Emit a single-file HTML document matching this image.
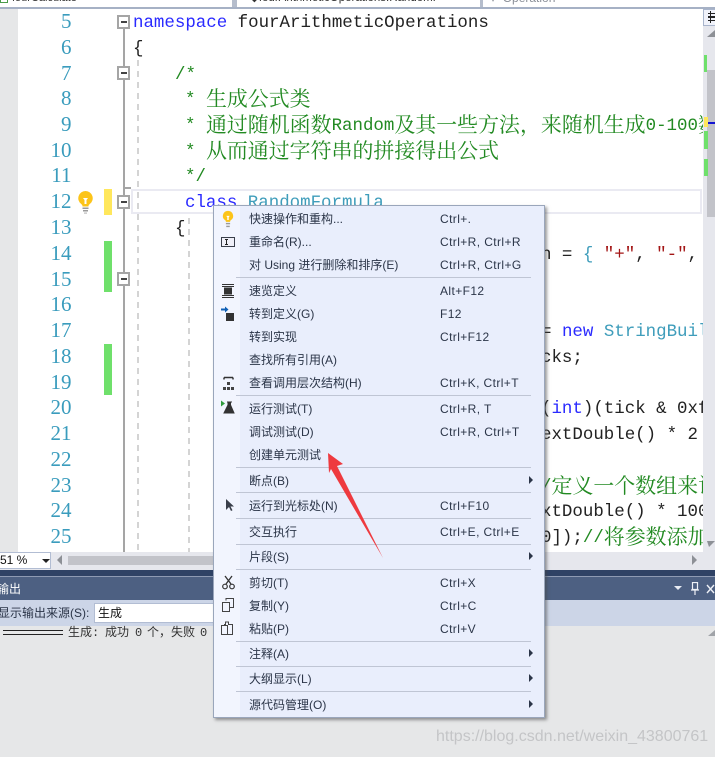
<!DOCTYPE html>
<html lang="zh"><head><meta charset="utf-8"><style>
html,body{margin:0;padding:0;width:715px;height:757px;overflow:hidden;background:#e6e7e8}
div,span,svg{box-sizing:border-box}
.a{position:absolute}
#page{position:relative;width:715px;height:757px;overflow:hidden}
.n{position:absolute;left:20px;width:51.5px;text-align:right;font:21px/26px "Liberation Serif",serif;color:#3a9cbd;height:26px}
#code{position:absolute;left:0;top:0;width:703px;height:552px;overflow:hidden}
.l{position:absolute;height:26px;margin-top:2px;white-space:pre;font:17.45px/26px "Liberation Mono","Noto Serif CJK SC",monospace;color:#222}
.c{color:#228a22}.c b{font:400 20.94px/0 "Noto Serif CJK SC",serif;position:relative;top:2px}
.k{color:#2a2aff}.t{color:#3f9dbb}.s{color:#a31515}
.box{position:absolute;left:117px;width:13px;height:14px;background:#fff;border:2px solid #a5a5a5}
.box:after{content:"";position:absolute;left:2px;top:4px;width:6px;height:2px;background:#444}
#menu{position:absolute;left:213px;top:205px;width:332px;height:513px;background:#e9eefc;border:1px solid #9aa6bb;box-shadow:2px 2px 3px rgba(70,70,70,.55)}
#strip{position:absolute;left:0;top:0;width:26px;height:511px;background:#f2f5fe}
.m,.sc{position:absolute;margin-top:1px;font:12px/16px "Liberation Sans","Noto Sans CJK SC",sans-serif;color:#2b3548;white-space:pre}
.m{left:35px}.sc{left:226px;letter-spacing:.4px}
.sep{position:absolute;left:22px;width:295px;height:1px;background:#bfc5d4}
.ar{position:absolute;left:315px;width:0;height:0;border-left:4px solid #2b3548;border-top:4px solid transparent;border-bottom:4px solid transparent}
.o{position:absolute;top:625px;font:12px/16px "Liberation Mono","Noto Sans CJK SC",monospace;color:#333;white-space:pre}
</style></head><body><div id="page">

<!-- tab bar -->
<div class="a" style="left:0;top:0;width:715px;height:9px;background:#fff;border-bottom:2px solid #a6b1c5"></div>
<div class="a" style="left:232px;top:0;width:5px;height:7px;background:#b5bdcc"></div>
<div class="a" style="left:480px;top:0;width:3px;height:7px;background:#b5bdcc"></div>
<div class="a" style="left:0;top:0;width:8px;height:3px;border:1px solid #4a9c4a;border-top:0"></div>
<div class="a" style="left:12px;top:-9px;font:11px/14px 'Liberation Sans',sans-serif;color:#333;white-space:pre">fourCalculate</div>
<div class="a" style="left:250px;top:-9px;width:228px;overflow:hidden;font:11.5px/14px 'Liberation Sans',sans-serif;color:#333;white-space:pre;height:16px">◆fourArithmeticOperations.RandomF</div>
<div class="a" style="left:490px;top:-9px;font:12px/14px 'Liberation Sans',sans-serif;color:#8a8f98;white-space:pre;height:16px">▾ &nbsp;Operation</div>

<!-- editor background -->
<div class="a" style="left:0;top:9px;width:18px;height:543px;background:#e6e7e8"></div>
<div class="a" style="left:18px;top:9px;width:685px;height:543px;background:#fff"></div>

<!-- line numbers -->
<div class="n" style="top:8px">5</div><div class="n" style="top:34px">6</div><div class="n" style="top:60px">7</div><div class="n" style="top:85px">8</div><div class="n" style="top:111px">9</div><div class="n" style="top:137px">10</div><div class="n" style="top:162px">11</div><div class="n" style="top:188px">12</div><div class="n" style="top:214px">13</div><div class="n" style="top:240px">14</div><div class="n" style="top:266px">15</div><div class="n" style="top:291px">16</div><div class="n" style="top:317px">17</div><div class="n" style="top:343px">18</div><div class="n" style="top:369px">19</div><div class="n" style="top:394px">20</div><div class="n" style="top:420px">21</div><div class="n" style="top:446px">22</div><div class="n" style="top:472px">23</div><div class="n" style="top:497px">24</div><div class="n" style="top:523px">25</div>

<!-- change bars -->
<div class="a" style="left:104px;top:189px;width:8px;height:26px;background:#ffe75c"></div>
<div class="a" style="left:104px;top:241px;width:8px;height:51px;background:#6fe06b"></div>
<div class="a" style="left:104px;top:344px;width:8px;height:51px;background:#6fe06b"></div>

<!-- bulb -->
<svg class="a" style="left:77px;top:190px" width="17" height="25" viewBox="0 0 17 25"><path d="M8.5 1a7.200 7.200 0 0 0-4.300 13c1 .8 1.300 1.500 1.300 2.500h6c0-1 .3-1.700 1.300-2.500A7.200 7.200 0 0 0 8.500 1z" fill="#fcc419"/><path d="M6 8h5l-1.500 2v4h-2v-4z" fill="#fff"/><rect x="5.500" y="17.500" width="6" height="1.500" fill="#9a9a9a"/><rect x="6" y="20" width="5" height="1.500" fill="#9a9a9a"/><rect x="7" y="22.500" width="3" height="1.200" fill="#bbb"/></svg>

<!-- outlining -->
<div class="a" style="left:123px;top:28px;width:2px;height:524px;background:#a5a5a5"></div>
<div class="a" style="left:123px;top:187px;width:8px;height:2px;background:#a5a5a5"></div>
<div class="box" style="top:15px"></div><div class="box" style="top:66px"></div><div class="box" style="top:195px"></div><div class="box" style="top:272px"></div>
<svg class="a" style="left:137px;top:60px" width="55" height="492"><line x1="1" y1="0" x2="1" y2="492" stroke="#d4d4d4" stroke-width="2" stroke-dasharray="6 5"/><line x1="52" y1="158" x2="52" y2="492" stroke="#d4d4d4" stroke-width="2" stroke-dasharray="6 5"/></svg>

<!-- current line -->
<div class="a" style="left:131px;top:189px;width:571px;height:25px;border:2px solid #eaeaf2"></div>

<!-- code -->
<div id="code">
<div class="l k" style="left:133px;top:8px">namespace <span style="color:#222">fourArithmeticOperations</span></div>
<div class="l" style="left:133px;top:34px">{</div>
<div class="l c" style="left:175px;top:60px">/*</div>
<div class="l c" style="left:185px;top:85px">* <b>生成公式类</b></div>
<div class="l c" style="left:185px;top:111px">* <b>通过随机函数</b>Random<b>及其一些方法，来随机生成</b>0-100<b>数</b></div>
<div class="l c" style="left:185px;top:137px">* <b>从而通过字符串的拼接得出公式</b></div>
<div class="l c" style="left:185px;top:162px">*/</div>
<div class="l k" style="left:185px;top:188px">class <span class="t">RandomFormula</span></div>
<div class="l" style="left:175px;top:214px">{</div>
<div class="l" style="left:541px;top:240px">n = <span class="t">{</span> <span class="s">"+"</span>, <span class="s">"-"</span>, <span class="s">"*"</span></div>
<div class="l" style="left:541px;top:317px">= <span class="k">new</span> <span class="t">StringBuilder</span></div>
<div class="l" style="left:541px;top:343px">cks;</div>
<div class="l" style="left:541px;top:394px">(<span class="k">int</span>)(tick &amp; 0xffff</div>
<div class="l" style="left:541px;top:420px">extDouble() * 2</div>
<div class="l c" style="left:541px;top:472px">/<b>定义一个数组来记</b></div>
<div class="l" style="left:541px;top:497px">xtDouble() * 100</div>
<div class="l" style="left:541px;top:523px">0]);<span class="c">//<b>将参数添加</b></span></div>
</div>

<!-- right scrollbar -->
<div class="a" style="left:703px;top:9px;width:12px;height:561px;background:#e6e7ed"></div>
<div class="a" style="left:703px;top:9px;width:12px;height:17px;background:#f0f2fa;border:1px solid #a9b5cc;border-right:0"></div>
<div class="a" style="left:708px;top:13px;width:7px;height:1px;background:#222"></div><div class="a" style="left:708px;top:16px;width:7px;height:2px;background:#222"></div><div class="a" style="left:708px;top:20px;width:7px;height:1px;background:#222"></div>
<div class="a" style="left:710px;top:11px;width:1px;height:12px;background:#222"></div>
<svg class="a" style="left:707px;top:30px" width="8" height="8"><path d="M0 7L8 0V7z" fill="#8d9096"/></svg>
<div class="a" style="left:707px;top:70px;width:8px;height:147px;background:#c2c3c9"></div>
<div class="a" style="left:704px;top:55px;width:3px;height:17px;background:#6fe06b"></div>
<div class="a" style="left:704px;top:131px;width:4px;height:18px;background:#6fe06b"></div>
<div class="a" style="left:704px;top:159px;width:4px;height:17px;background:#6fe06b"></div>
<div class="a" style="left:704px;top:117px;width:4px;height:10px;background:#ffe75c"></div>
<div class="a" style="left:708px;top:122px;width:7px;height:2px;background:#1414d2"></div>
<svg class="a" style="left:707px;top:540px" width="8" height="8"><path d="M0 1H8L8 1L2 7z" fill="#8d9096"/></svg>

<!-- h scrollbar -->
<div class="a" style="left:0;top:552px;width:703px;height:18px;background:#e6e7ed"></div>
<div class="a" style="left:-2px;top:552px;width:53px;height:17px;background:#fff;border:1px solid #b2bdd3"></div>
<div class="a" style="left:0;top:553px;font:12px/15px 'Liberation Sans',sans-serif;color:#111">51 %</div>
<svg class="a" style="left:42px;top:559px" width="8" height="5"><path d="M0 0H8L4 4z" fill="#222"/></svg>
<svg class="a" style="left:57px;top:555px" width="6" height="10"><path d="M5 0V10L0 5z" fill="#8d9096"/></svg>
<div class="a" style="left:68px;top:556px;width:160px;height:9px;background:#c2c3c9"></div>
<svg class="a" style="left:692px;top:555px" width="6" height="10"><path d="M0 0V10L5 5z" fill="#8d9096"/></svg>

<!-- output panel -->
<div class="a" style="left:0;top:570px;width:715px;height:6px;background:#2f4265"></div>
<div class="a" style="left:0;top:576px;width:715px;height:1px;background:#8e9ab3"></div>
<div class="a" style="left:0;top:577px;width:715px;height:23px;background:#4d6082"></div>
<div class="a" style="left:-3px;top:581px;font:12px/16px 'Liberation Sans','Noto Sans CJK SC',sans-serif;color:#fff">输出</div>
<svg class="a" style="left:674px;top:586px" width="8" height="5"><path d="M0 0H8L4 4z" fill="#e8ecf4"/></svg>
<svg class="a" style="left:690px;top:582px" width="10" height="14"><path d="M2.500 .5h5v7h-5zM1 8h8M5 8v5" fill="none" stroke="#eef1f7" stroke-width="1.200"/></svg>
<svg class="a" style="left:706px;top:584px" width="9" height="10"><path d="M1 1l7 8M8 1L1 9" stroke="#eef1f7" stroke-width="1.400"/></svg>
<div class="a" style="left:0;top:600px;width:715px;height:26px;background:#ccd5e7"></div>
<div class="a" style="left:-2px;top:605px;font:12px/16px 'Liberation Sans','Noto Sans CJK SC',sans-serif;color:#2b3548;white-space:pre">显示输出来源(S):</div>
<div class="a" style="left:94px;top:603px;width:125px;height:20px;background:#fff;border:1px solid #b2bdd3"></div>
<div class="a" style="left:98px;top:605px;font:12px/16px 'Noto Sans CJK SC',sans-serif;color:#111">生成</div>
<div class="a" style="left:3px;top:630px;width:60px;height:5px;border-top:1px solid #222;border-bottom:1px solid #222"></div>
<div class="o" style="left:68px">生成:</div><div class="o" style="left:105px">成功</div><div class="o" style="left:135px">0</div><div class="o" style="left:147px">个，</div><div class="o" style="left:171px">失败</div><div class="o" style="left:200px">0</div>
<svg class="a" style="left:708px;top:630px" width="7" height="7"><path d="M0 6L7 0V6z" fill="#a0a3a8"/></svg>

<!-- watermark -->
<div class="a" style="left:436px;top:728px;font:16px/18px 'Liberation Sans',sans-serif;color:#c4c5c7;white-space:pre">https://blog.csdn.net/weixin_43800761</div>

<!-- menu -->
<div id="menu"><div id="strip"></div>
<svg class="a" style="left:8px;top:4px" width="12" height="18" viewBox="0 0 17 25"><path d="M8.500 1a7.200 7.200 0 0 0-4.300 13c1 .8 1.300 1.500 1.300 2.500h6c0-1 .3-1.700 1.300-2.500A7.200 7.200 0 0 0 8.500 1z" fill="#fcc419"/><path d="M6 8h5l-1.500 2v4h-2v-4z" fill="#fff"/><rect x="5.500" y="18" width="6" height="2" fill="#9a9a9a"/><rect x="6" y="22" width="5" height="2" fill="#9a9a9a"/></svg>
<svg class="a" style="left:7px;top:31px" width="15" height="11"><rect x=".5" y=".5" width="13" height="9" fill="#f0f0f8" stroke="#3a3f4a"/><path d="M4 2.500h3M4 7.500h3M5.500 2.500v5" stroke="#222" fill="none"/></svg>
<svg class="a" style="left:7px;top:78px" width="14" height="14"><path d="M1 .5h12M1 2.500h12M1 11.500h12M1 13.500h12" stroke="#333"/><rect x="3" y="3.500" width="8" height="7" fill="#333"/></svg>
<svg class="a" style="left:7px;top:100px" width="15" height="16"><path d="M0 3.500h5" stroke="#0f5fb5" stroke-width="2"/><path d="M4 .5l3.500 3-3.500 3z" fill="#0f5fb5"/><rect x="5" y="7" width="8" height="8" fill="#333"/></svg>
<svg class="a" style="left:8px;top:169px" width="13" height="16"><path d="M2 2.500h9M2 2.500v2M11 2.500v2" stroke="#333" stroke-width="1.500" fill="none"/><path d="M5 7h3v3H5zM1 12h3v3H1zM9 12h3v3H9zM5 12h3v3H5z" fill="#444"/></svg>
<svg class="a" style="left:7px;top:194px" width="15" height="15"><path d="M0 .5l4 3-4 3z" fill="#2e9b3c"/><path d="M6 2h5M7 2v3L3 13h10L9.500 5V2" stroke="#333" fill="#333"/></svg>
<svg class="a" style="left:11px;top:293px" width="9" height="13"><path d="M1 0v11l3-3 2 4 1.500-.8-2-3.700H9z" fill="#3a3f4a"/></svg>
<svg class="a" style="left:8px;top:369px" width="13" height="15"><path d="M3 1l6 8M10 1L4 9" stroke="#333" stroke-width="1.300"/><circle cx="3" cy="11.500" r="2.300" fill="none" stroke="#333" stroke-width="1.200"/><circle cx="10" cy="11.500" r="2.300" fill="none" stroke="#333" stroke-width="1.200"/></svg>
<svg class="a" style="left:8px;top:392px" width="13" height="15"><rect x=".5" y="4.500" width="7" height="9" fill="none" stroke="#444"/><path d="M4 2.500V.5h7.500v9H8" fill="none" stroke="#444"/></svg>
<svg class="a" style="left:7px;top:415px" width="13" height="15"><rect x=".5" y="4.500" width="6" height="9" fill="none" stroke="#444"/><path d="M6.500 13.500h5v-10h-2M3.500 4.500v-1h1V1h3v2.500h2" fill="none" stroke="#444"/></svg>

<div class="m" style="top:4px">快速操作和重构...</div><div class="sc" style="top:4px">Ctrl+.</div>
<div class="m" style="top:27px">重命名(R)...</div><div class="sc" style="top:27px">Ctrl+R, Ctrl+R</div>
<div class="m" style="top:50px">对 Using 进行删除和排序(E)</div><div class="sc" style="top:50px">Ctrl+R, Ctrl+G</div>
<div class="sep" style="top:71px"></div>
<div class="m" style="top:76px">速览定义</div><div class="sc" style="top:76px">Alt+F12</div>
<div class="m" style="top:99px">转到定义(G)</div><div class="sc" style="top:99px">F12</div>
<div class="m" style="top:122px">转到实现</div><div class="sc" style="top:122px">Ctrl+F12</div>
<div class="m" style="top:145px">查找所有引用(A)</div>
<div class="m" style="top:168px">查看调用层次结构(H)</div><div class="sc" style="top:168px">Ctrl+K, Ctrl+T</div>
<div class="sep" style="top:189px"></div>
<div class="m" style="top:194px">运行测试(T)</div><div class="sc" style="top:194px">Ctrl+R, T</div>
<div class="m" style="top:217px">调试测试(D)</div><div class="sc" style="top:217px">Ctrl+R, Ctrl+T</div>
<div class="m" style="top:240px">创建单元测试</div>
<div class="sep" style="top:261px"></div>
<div class="m" style="top:266px">断点(B)</div><div class="ar" style="top:270px"></div>
<div class="sep" style="top:286px"></div>
<div class="m" style="top:291px">运行到光标处(N)</div><div class="sc" style="top:291px">Ctrl+F10</div>
<div class="sep" style="top:312px"></div>
<div class="m" style="top:317px">交互执行</div><div class="sc" style="top:317px">Ctrl+E, Ctrl+E</div>
<div class="sep" style="top:338px"></div>
<div class="m" style="top:342px">片段(S)</div><div class="ar" style="top:346px"></div>
<div class="sep" style="top:363px"></div>
<div class="m" style="top:368px">剪切(T)</div><div class="sc" style="top:368px">Ctrl+X</div>
<div class="m" style="top:391px">复制(Y)</div><div class="sc" style="top:391px">Ctrl+C</div>
<div class="m" style="top:414px">粘贴(P)</div><div class="sc" style="top:414px">Ctrl+V</div>
<div class="sep" style="top:435px"></div>
<div class="m" style="top:439px">注释(A)</div><div class="ar" style="top:443px"></div>
<div class="sep" style="top:460px"></div>
<div class="m" style="top:464px">大纲显示(L)</div><div class="ar" style="top:468px"></div>
<div class="sep" style="top:485px"></div>
<div class="m" style="top:490px">源代码管理(O)</div><div class="ar" style="top:494px"></div>
</div>

<!-- red arrow -->
<svg class="a" style="left:320px;top:448px" width="70" height="115"><path d="M8 5L23 16L17 18L63 110L11 21L9 25z" fill="#ee3a3f"/></svg>

</div></body></html>
